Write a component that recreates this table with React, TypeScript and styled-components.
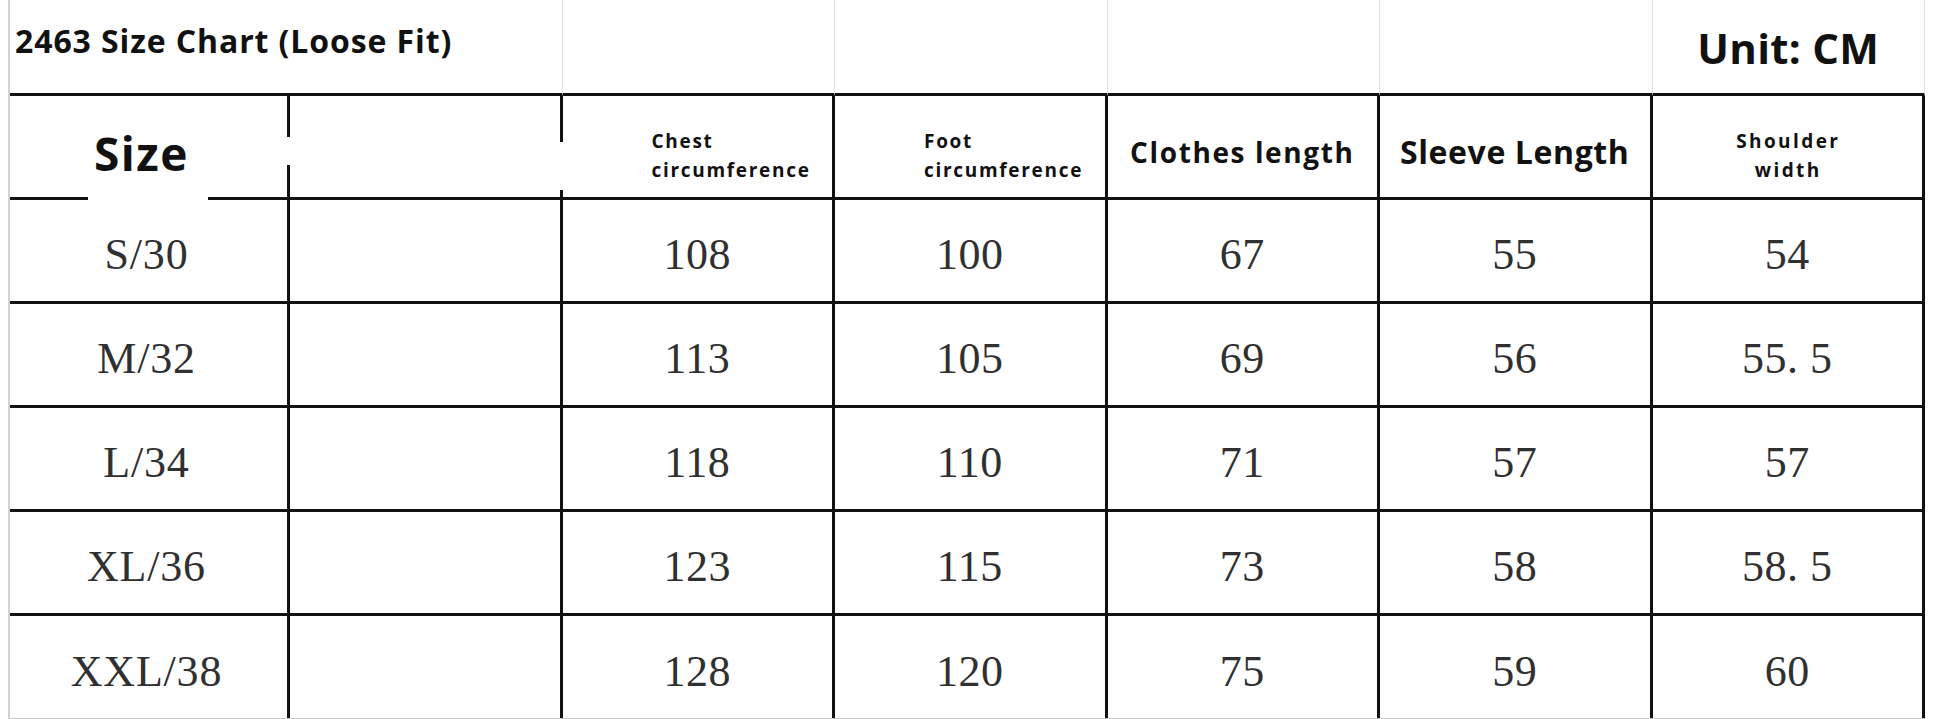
import React from 'react';
import styled, { createGlobalStyle } from 'styled-components';

const Global = createGlobalStyle`
  html, body { margin: 0; padding: 0; background: #ffffff; }
  body { width: 1946px; height: 719px; overflow: hidden; }
`;

const Sheet = styled.div`
  margin-left: 8px;
  width: 1917px;
  border-left: 2px solid #d2d2d2;
  border-bottom: 1px solid #c8c8c8;
  display: grid;
  grid-template-columns: 280px repeat(6, 272.5px);
  grid-template-rows: 96px 104px 104px 104px 104px 104px 102px;
  box-sizing: border-box;
`;

const TitleCell = styled.div<{ $span?: number; $center?: boolean }>`
  grid-column: span ${(p) => p.$span ?? 1};
  box-sizing: border-box;
  border-right: 1px solid #e4e4e4;
  border-bottom: 3px solid #111;
  display: flex;
  align-items: center;
  justify-content: ${(p) => (p.$center ? 'center' : 'flex-start')};
  padding-left: ${(p) => (p.$center ? 0 : 5)}px;
  font-family: 'Open Sans', 'Liberation Sans', sans-serif;
  font-weight: 700;
  color: #111;
`;

const Title = styled.span`
  font-size: 32px;
  letter-spacing: 0.9px;
  padding-bottom: 12px;
`;

const Unit = styled.span`
  font-size: 42px;
  letter-spacing: 0.3px;
  padding-top: 2px;
`;

const HeaderCell = styled.div<{ $gapTop?: number; $gapH?: number }>`
  position: relative;
  box-sizing: border-box;
  border-right: 3px solid #111;
  border-bottom: 3px solid #111;
  display: flex;
  align-items: center;
  justify-content: center;
  font-family: 'Open Sans', 'Liberation Sans', sans-serif;
  font-weight: 700;
  color: #111;
  &::before {
    content: '';
    display: ${(p) => (p.$gapH ? 'block' : 'none')};
    position: absolute;
    right: -3px;
    top: ${(p) => p.$gapTop ?? 0}px;
    width: 3px;
    height: ${(p) => p.$gapH ?? 0}px;
    background: #fff;
  }
`;

const SizeHead = styled(HeaderCell)`
  padding-top: 12px;
  padding-right: 14px;
  font-size: 46px;
  letter-spacing: 1.5px;
  &::after {
    content: '';
    position: absolute;
    left: 78px;
    width: 120px;
    bottom: -3px;
    height: 3px;
    background: #fff;
  }
`;

const SmallHead = styled(HeaderCell)<{ $align?: 'left' | 'center' }>`
  justify-content: ${(p) => (p.$align === 'center' ? 'center' : 'flex-start')};
  padding-left: ${(p) => (p.$align === 'center' ? 2 : 89)}px;
  padding-top: 18px;
  text-align: ${(p) => p.$align ?? 'left'};
  font-size: 19px;
  line-height: 29px;
  letter-spacing: ${(p) => (p.$align === 'center' ? 2.4 : 1.7)}px;
`;

const BigHead = styled(HeaderCell)<{ $size: number; $ls: number }>`
  font-size: ${(p) => p.$size}px;
  letter-spacing: ${(p) => p.$ls}px;
  padding-top: 10px;
`;

const DataCell = styled.div<{ $last?: boolean; $label?: boolean }>`
  box-sizing: border-box;
  border-right: 3px solid #111;
  border-bottom: ${(p) => (p.$last ? 'none' : '3px solid #111')};
  display: flex;
  align-items: center;
  justify-content: center;
  padding-top: 8px;
  padding-right: ${(p) => (p.$label ? 4 : 0)}px;
  font-family: 'Liberation Serif', 'Times New Roman', serif;
  font-size: 44px;
  letter-spacing: ${(p) => (p.$label ? 0.8 : 0.5)}px;
  color: #303030;
`;

const rows: string[][] = [
  ['S/30', '108', '100', '67', '55', '54'],
  ['M/32', '113', '105', '69', '56', '55. 5'],
  ['L/34', '118', '110', '71', '57', '57'],
  ['XL/36', '123', '115', '73', '58', '58. 5'],
  ['XXL/38', '128', '120', '75', '59', '60'],
];

export default function App() {
  return (
    <>
      <Global />
      <Sheet>
        <TitleCell $span={2}>
          <Title>2463 Size Chart (Loose Fit)</Title>
        </TitleCell>
        <TitleCell />
        <TitleCell />
        <TitleCell />
        <TitleCell />
        <TitleCell $center>
          <Unit>Unit: CM</Unit>
        </TitleCell>

        <SizeHead $gapTop={41} $gapH={28}>Size</SizeHead>
        <HeaderCell $gapTop={46} $gapH={48} />
        <SmallHead>
          Chest
          <br />
          circumference
        </SmallHead>
        <SmallHead>
          Foot
          <br />
          circumference
        </SmallHead>
        <BigHead $size={28} $ls={1.6}>Clothes length</BigHead>
        <BigHead $size={32} $ls={0.6}>Sleeve Length</BigHead>
        <SmallHead $align="center">
          Shoulder
          <br />
          width
        </SmallHead>

        {rows.map((r, i) => (
          <React.Fragment key={r[0]}>
            <DataCell $label $last={i === rows.length - 1}>{r[0]}</DataCell>
            <DataCell $last={i === rows.length - 1} />
            {r.slice(1).map((v, j) => (
              <DataCell key={j} $last={i === rows.length - 1}>
                {v}
              </DataCell>
            ))}
          </React.Fragment>
        ))}
      </Sheet>
    </>
  );
}
